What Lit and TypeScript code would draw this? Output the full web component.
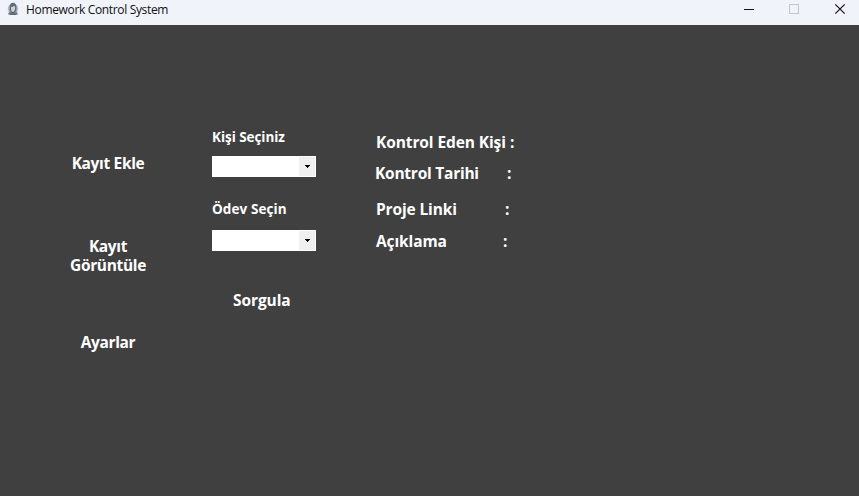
import { LitElement, html, css } from "lit";
import { customElement } from "lit/decorators.js";

@customElement("combo-box")
class ComboBox extends LitElement {
  static styles = css`
    :host { display: flex; box-sizing: border-box; width: 104px; height: 21px; background: #fff; padding: 1px; justify-content: flex-end; }
    .drop { width: 16px; height: 19px; background: #f0f0f0; display: flex; align-items: center; justify-content: center; }
    svg { display: block; }
  `;
  render() {
    return html`<div class="drop"><svg width="5" height="3" shape-rendering="crispEdges"><path d="M0 0H5V1H4V2H3V3H2V2H1V1H0Z" fill="#000"/></svg></div>`;
  }
}

@customElement("app-root")
class AppRoot extends LitElement {
  static styles = css`
    :host { display: block; width: 859px; height: 496px; overflow: hidden; background: #404040; color: #fff; font-family: "Open Sans", "Noto Sans", sans-serif; }
    .bar { display: flex; align-items: center; height: 25px; background: #f0f3f9; color: #111; }
    .logo { display: block; margin: 0 6px 7px 7px; }
    .title { font: 12px/20px "Open Sans", sans-serif; letter-spacing: -0.34px; margin-bottom: 5px; flex: 1; white-space: nowrap; }
    .controls { display: block; }
    .body { display: flex; height: 471px; font-weight: 700; font-size: 15.5px; letter-spacing: -0.24px; line-height: 20px; white-space: nowrap; }
    .nav { width: 84px; margin-left: 66px; padding-top: 128px; text-align: center; letter-spacing: -0.34px; }
    .records { margin-top: 64px; line-height: 19px; }
    .settings { margin-top: 57px; }
    .query { width: 104px; margin-left: 62px; padding-top: 102px; }
    .first, .second { font-size: 13.5px; letter-spacing: 0; }
    .first { letter-spacing: -0.05px; }
    .second { letter-spacing: 0.1px; }
    .query combo-box { margin-top: 9px; }
    .second { margin-top: 22px; }
    .query .second + combo-box { margin-top: 11px; }
    .submit { margin: 39px 0 0 21px; letter-spacing: -0.08px; }
    .details { margin-left: 60px; padding-top: 107px; }
    .row { display: flex; }
    .name { display: block; }
    .r1 .name { width: 134px; letter-spacing: -0.1px; }
    .r2 { margin: 11px 0 0 -1px; }
    .r2 .name { width: 132px; }
    .r3 { margin-top: 16px; }
    .r3 .name { width: 129px; letter-spacing: -0.14px; }
    .r4 { margin-top: 12px; }
    .r4 .name { width: 127px; letter-spacing: -0.12px; }
  `;
  render() {
    return html`
      <div class="bar">
        <svg class="logo" width="13" height="14" viewBox="0 0 13 14">
          <circle cx="6" cy="6.8" r="5.2" fill="#b5bfcc"/>
          <path d="M2.6 9V4.5Q3 .8 6 .8T9.4 4.5V9Z" fill="#666c75"/>
          <path d="M1 12.6Q1 10 3.8 9L6 10.5L8.2 9Q11 10 11 12.6Z" fill="#7a818b"/>
          <path d="M4.1 5Q6 5 7 3.8L8.1 5Q8.3 9 6 9.5T4.1 5Z" fill="#d0d3d8"/>
          <path d="M4.3 9.3L6 11L7.7 9.3M2.5 12.3H9.5" fill="none" stroke="#41464e" stroke-width=".9"/>
        </svg>
        <div class="title">Homework Control System</div>
        <svg class="controls" width="119" height="25" viewBox="0 0 119 25">
          <path d="M4 9.5H14" stroke="#111" />
          <rect x="49.5" y="4.5" width="9" height="9" fill="none" stroke="#c1c4ca"/>
          <path d="M95.3 4.3L104.7 13.7M104.7 4.3L95.3 13.7" stroke="#111" stroke-width="1.2"/>
        </svg>
      </div>
      <div class="body">
        <div class="nav">
          <div class="add">Kayıt Ekle</div>
          <div class="records">Kayıt<br>Görüntüle</div>
          <div class="settings">Ayarlar</div>
        </div>
        <div class="query">
          <div class="first">Kişi Seçiniz</div>
          <combo-box></combo-box>
          <div class="second">Ödev Seçin</div>
          <combo-box></combo-box>
          <div class="submit">Sorgula</div>
        </div>
        <div class="details">
          <div class="row r1"><span class="name">Kontrol Eden Kişi</span><span>:</span></div>
          <div class="row r2"><span class="name">Kontrol Tarihi</span><span>:</span></div>
          <div class="row r3"><span class="name">Proje Linki</span><span>:</span></div>
          <div class="row r4"><span class="name">Açıklama</span><span>:</span></div>
        </div>
      </div>`;
  }
}
